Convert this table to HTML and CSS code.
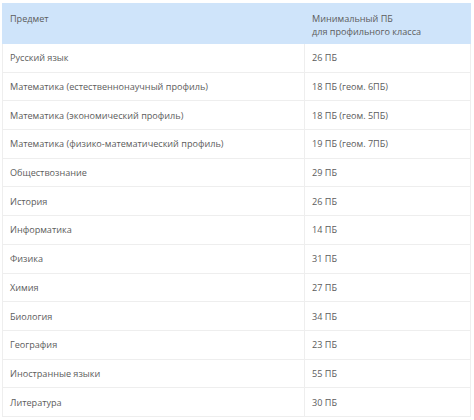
FILE: index.html
```html
<!DOCTYPE html>
<html lang="ru">
<head>
<meta charset="utf-8">
<link rel="stylesheet" href="styles.css">
</head>
<body>
<table class="scores">
  <thead>
    <tr><th class="subj">Предмет</th><th class="val">Минимальный ПБ<br>для профильного класса</th></tr>
  </thead>
  <tbody>
    <tr><td>Русский язык</td><td>26 ПБ</td></tr>
    <tr><td>Математика (естественнонаучный профиль)</td><td>18 ПБ (геом. 6ПБ)</td></tr>
    <tr><td>Математика (экономический профиль)</td><td>18 ПБ (геом. 5ПБ)</td></tr>
    <tr><td>Математика (физико-математический профиль)</td><td>19 ПБ (геом. 7ПБ)</td></tr>
    <tr><td>Обществознание</td><td>29 ПБ</td></tr>
    <tr><td>История</td><td>26 ПБ</td></tr>
    <tr><td>Информатика</td><td>14 ПБ</td></tr>
    <tr><td>Физика</td><td>31 ПБ</td></tr>
    <tr><td>Химия</td><td>27 ПБ</td></tr>
    <tr><td>Биология</td><td>34 ПБ</td></tr>
    <tr><td>География</td><td>23 ПБ</td></tr>
    <tr><td>Иностранные языки</td><td>55 ПБ</td></tr>
    <tr><td>Литература</td><td>30 ПБ</td></tr>
  </tbody>
</table>
</body>
</html>
```
FILE: styles.css
```css
html, body {
  margin: 0;
  padding: 0;
  background: #ffffff;
}
body {
  padding: 3px 3px 0 2px;
  font-family: "Open Sans", "DejaVu Sans", sans-serif;
  font-size: 9.1px;
  color: #5c5c5c;
}
.scores {
  width: 469px;
  border-collapse: collapse;
  table-layout: fixed;
}
.scores th,
.scores td {
  text-align: left;
  font-weight: 400;
  vertical-align: middle;
  padding: 0 0 0 7px;
  border: 1px solid #eeeeee;
  line-height: 13px;
}
.scores th {
  background: #cfe4fa;
  border-color: #cfe4fa;
  height: 40px;
  vertical-align: top;
  padding-top: 8px;
  box-sizing: border-box;
}
.scores .subj {
  width: 302px;
}
.scores td {
  height: 28.7px;
  box-sizing: border-box;
}
```
